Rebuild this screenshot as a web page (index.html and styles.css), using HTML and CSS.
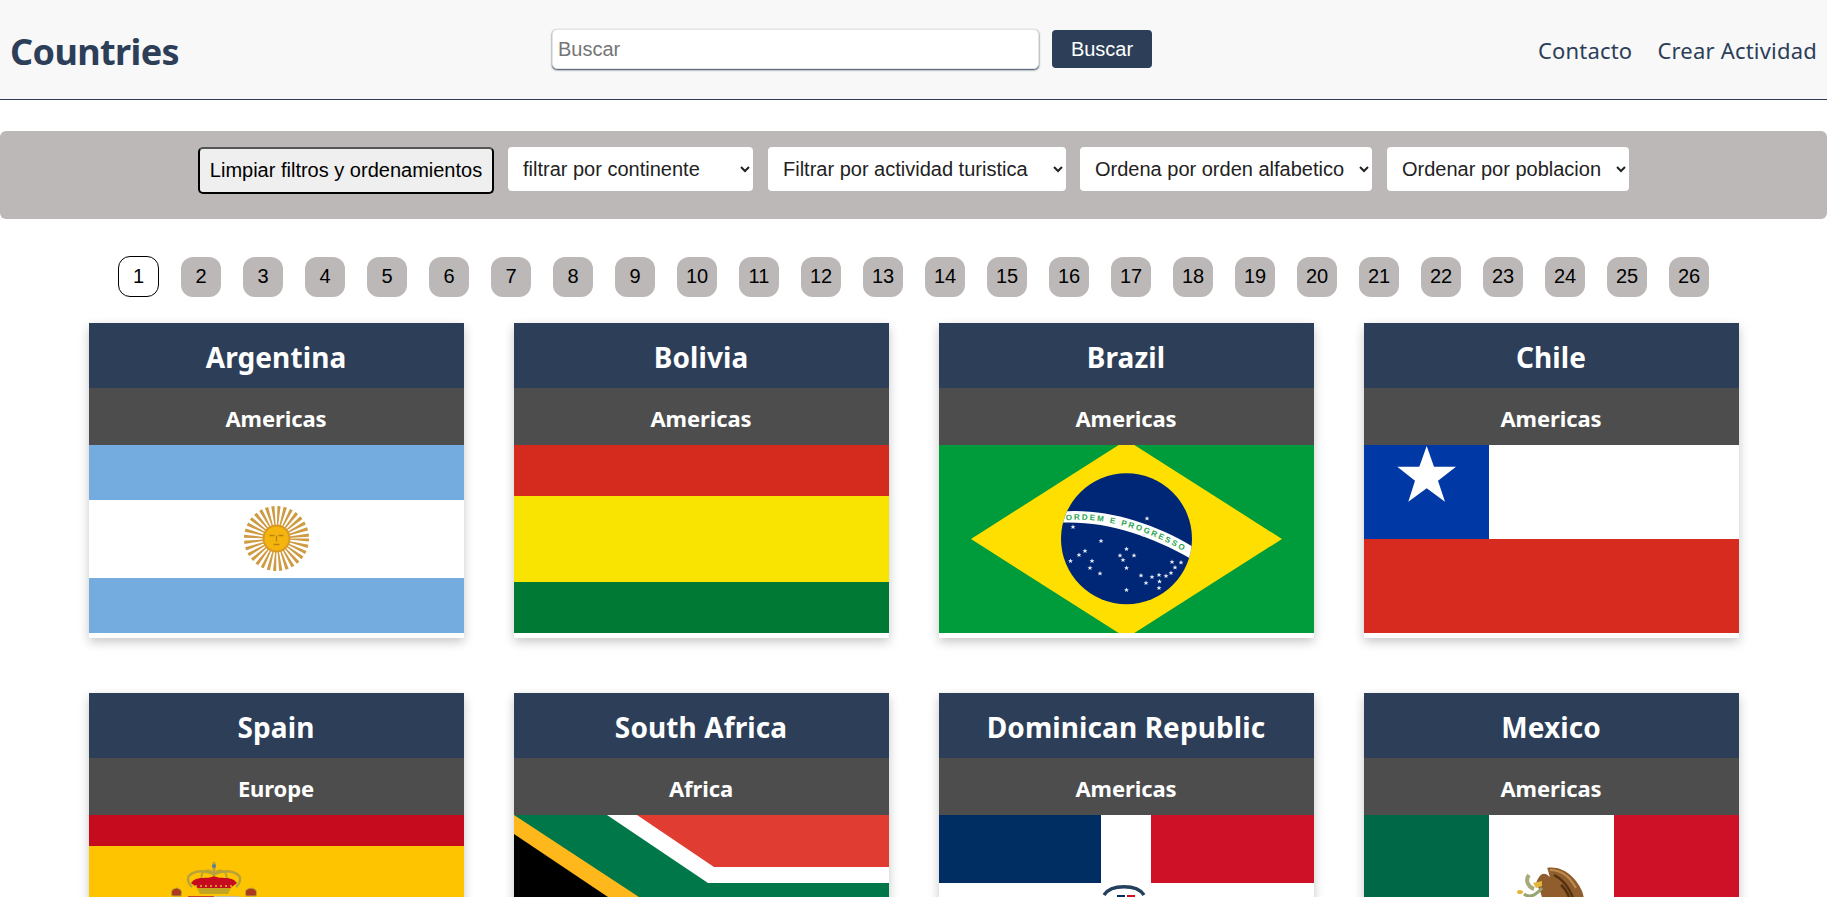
FILE: index.html
```html
<!DOCTYPE html>
<html lang="es">
<head>
<meta charset="utf-8">
<title>Countries</title>
<link rel="stylesheet" href="styles.css">
</head>
<body>
<header class="navbar">
  <h1 class="brand">Countries</h1>
  <form class="search">
    <input class="search-input" type="text" placeholder="Buscar">
    <button class="search-btn" type="button">Buscar</button>
  </form>
  <nav class="links"><a href="#">Contacto</a><a href="#">Crear Actividad</a></nav>
</header>
<section class="filters">
  <button class="clear" type="button">Limpiar filtros y ordenamientos</button>
  <select class="sel sel-a"><option>filtrar por continente</option></select>
  <select class="sel sel-b"><option>Filtrar por actividad turistica</option></select>
  <select class="sel sel-c"><option>Ordena por orden alfabetico</option></select>
  <select class="sel sel-d"><option>Ordenar por poblacion</option></select>
</section>
<nav class="pages">
  <span class="page active">1</span><span class="page">2</span><span class="page">3</span><span class="page">4</span><span class="page">5</span><span class="page">6</span><span class="page">7</span><span class="page">8</span><span class="page">9</span><span class="page">10</span><span class="page">11</span><span class="page">12</span><span class="page">13</span><span class="page">14</span><span class="page">15</span><span class="page">16</span><span class="page">17</span><span class="page">18</span><span class="page">19</span><span class="page">20</span><span class="page">21</span><span class="page">22</span><span class="page">23</span><span class="page">24</span><span class="page">25</span><span class="page">26</span>
</nav>
<main class="grid">
  <article class="card">
    <h2 class="name">Argentina</h2><h3 class="cont">Americas</h3>
    <svg class="flag" viewBox="0 0 375 188">
      <rect width="375" height="188" fill="#74acdf"/>
      <rect y="55" width="375" height="78" fill="#fff"/>
      <g transform="translate(187.5 93.5)">
        <circle r="22" fill="none" stroke="#c98f2e" stroke-width="21" stroke-dasharray="2.2 2.12" opacity=".9"/>
        <circle r="14" fill="#d99a22"/>
        <circle r="12" fill="#f6b40e"/>
        <path d="M-7-3h5M2-3h5M0-3v6M-3 6h6" stroke="#b98414" stroke-width="1.3" fill="none"/>
      </g>
    </svg>
  </article>
  <article class="card">
    <h2 class="name">Bolivia</h2><h3 class="cont">Americas</h3>
    <svg class="flag" viewBox="0 0 375 188">
      <rect width="375" height="51" fill="#d52b1e"/>
      <rect y="51" width="375" height="86" fill="#f9e300"/>
      <rect y="137" width="375" height="51" fill="#007934"/>
    </svg>
  </article>
  <article class="card">
    <h2 class="name">Brazil</h2><h3 class="cont">Americas</h3>
    <svg class="flag" viewBox="0 0 375 188">
      <defs>
        <path id="star" d="M0-2.6.7-.8 2.5-.8 1.1.3 1.6 2.1 0 1 -1.6 2.1-1.1.3-2.5-.8-.7-.8Z" fill="#e8ecf6"/>
        <clipPath id="globe"><circle cx="187.5" cy="93.7" r="65.5"/></clipPath>
      </defs>
      <rect width="375" height="188" fill="#009b3a"/>
      <polygon points="32,94 187.5,-5 343,94 187.5,193" fill="#fedf00"/>
      <circle cx="187.5" cy="93.7" r="65.5" fill="#002776"/>
      <path clip-path="url(#globe)" d="M118 67C165 62 215 78 256 103L252 114C210 90 165 75 118 78Z" fill="#fff"/>
      <path id="band" d="M127 75.5C165 71 212 86 252 110.5" fill="none"/>
      <text class="motto"><textPath href="#band">ORDEM E PROGRESSO</textPath></text>
      <g>
        <use href="#star" x="208" y="73.5"/><use href="#star" x="134" y="82"/><use href="#star" x="205" y="90"/>
        <use href="#star" x="162" y="96"/><use href="#star" x="187.5" y="104"/><use href="#star" x="146" y="106"/>
        <use href="#star" x="140" y="110"/><use href="#star" x="181" y="110.5"/><use href="#star" x="195" y="110.5"/>
        <use href="#star" x="184" y="115"/><use href="#star" x="131.5" y="116"/><use href="#star" x="153" y="116"/>
        <use href="#star" x="233" y="117"/><use href="#star" x="242" y="117.5"/><use href="#star" x="236" y="122.5"/>
        <use href="#star" x="151" y="123"/><use href="#star" x="187.5" y="123"/><use href="#star" x="232" y="128"/>
        <use href="#star" x="161" y="128.5"/><use href="#star" x="202" y="130.5"/><use href="#star" x="220" y="130"/>
        <use href="#star" x="227" y="131"/><use href="#star" x="213" y="132"/><use href="#star" x="220.5" y="136.5"/>
        <use href="#star" x="207" y="138"/><use href="#star" x="220" y="143"/><use href="#star" x="187.5" y="145"/>
      </g>
    </svg>
  </article>
  <article class="card">
    <h2 class="name">Chile</h2><h3 class="cont">Americas</h3>
    <svg class="flag" viewBox="0 0 375 188">
      <rect width="375" height="94" fill="#fff"/>
      <rect y="94" width="375" height="94" fill="#d72b1f"/>
      <rect width="125" height="94" fill="#0039a6"/>
      <polygon points="62.7,1 70,21.7 92,21.7 74,35.7 81,56.700 62.700,43.300 44.300,56.700 51,35.700 33.300,21.700 55.300,21.700" fill="#fff"/>
    </svg>
  </article>
  <article class="card">
    <h2 class="name">Spain</h2><h3 class="cont">Europe</h3>
    <svg class="flag" viewBox="0 0 375 188">
      <rect width="375" height="188" fill="#ffc400"/>
      <rect width="375" height="31" fill="#c60b1e"/>
      <rect y="141" width="375" height="47" fill="#c60b1e"/>
      <path d="M103 72C91 60 108 52 125 59C142 52 159 60 147 72" fill="none" stroke="#b8a23a" stroke-width="2.5"/>
      <path d="M113 66C110 55 120 53 125 59C130 53 140 55 137 66" fill="none" stroke="#b8a23a" stroke-width="2"/>
      <path d="M102 68C108 60 118 65 125 61C132 65 142 60 148 68L140 74H110Z" fill="#c60b1e"/>
      <rect x="123.500" y="47" width="3" height="14" fill="#b8a23a"/>
      <circle cx="125" cy="51" r="2" fill="#5b7f9a"/>
      <path d="M108 73H142L139 79H111Z" fill="#c2a520"/>
      <path d="M106 71H144" stroke="#d8b840" stroke-width="1.500" stroke-dasharray="2 3"/>
      <path d="M83 81C81 74 85 74 87.700 73C90 74 94 74 92 81Z" fill="#ad3a1c" stroke="#b8a23a"/>
      <path d="M157 81C155 74 159 74 162 73C165 74 169 74 167 81Z" fill="#ad3a1c" stroke="#b8a23a"/>
      <rect x="99" y="81" width="26" height="55" fill="#c8452a"/>
      <rect x="125" y="81" width="25" height="55" fill="#c4c0ac"/>
    </svg>
  </article>
  <article class="card">
    <h2 class="name">South Africa</h2><h3 class="cont">Africa</h3>
    <svg class="flag" viewBox="0 0 375 188">
      <rect width="375" height="188" fill="#007749"/>
      <polygon points="93,0 375,0 375,52 200,52" fill="#e03c31"/>
      <polygon points="93,0 123,0 200,52 375,52 375,68 194,68" fill="#fff"/>
      <polygon points="0,0 0,0 125,82 0,188" fill="#ffb81c"/>
      <polygon points="0,19 94,82 0,165" fill="#000"/>
    </svg>
  </article>
  <article class="card">
    <h2 class="name">Dominican Republic</h2><h3 class="cont">Americas</h3>
    <svg class="flag" viewBox="0 0 375 188">
      <rect width="375" height="188" fill="#fff"/>
      <rect width="162" height="68" fill="#002d62"/>
      <rect x="212" width="163" height="68" fill="#ce1126"/>
      <rect y="120" width="162" height="68" fill="#ce1126"/>
      <rect x="212" y="120" width="163" height="68" fill="#002d62"/>
      <path d="M165 80C172 69 198 69 205 80" fill="none" stroke="#23405f" stroke-width="3.500"/>
      <rect x="178" y="80" width="8" height="16" fill="#002d62"/>
      <rect x="188" y="80" width="8" height="16" fill="#ce1126"/>
    </svg>
  </article>
  <article class="card">
    <h2 class="name">Mexico</h2><h3 class="cont">Americas</h3>
    <svg class="flag" viewBox="0 0 375 188">
      <rect width="375" height="188" fill="#fff"/>
      <rect width="125" height="188" fill="#006847"/>
      <rect x="250" width="125" height="188" fill="#ce1126"/>
      <path d="M172 68C176 58 180 56 186 62C184 56 184 54 183 53C198 50 212 62 218 76C222 88 222 100 218 125H180C186 108 180 88 176 76Z" fill="#8f5e2c"/>
      <path d="M190 60C202 66 210 78 213 100M197 70C204 76 208 86 208 102" fill="none" stroke="#53300f" stroke-width="2.500"/>
      <path d="M186 55C197 55 206 62 212 73" fill="none" stroke="#c08d50" stroke-width="2"/>
      <polygon points="169,68 178,66 178,71 172,73" fill="#e4b53a"/>
      <path d="M165 60C161 65 164 72 170 74" fill="none" stroke="#a7a978" stroke-width="4"/>
      <path d="M160 79C166 84 172 80 178 73" fill="none" stroke="#98a672" stroke-width="3"/>
      <ellipse cx="156" cy="77" rx="3" ry="2" fill="#e4b53a"/>
    </svg>
  </article>
</main>
</body>
</html>
```

FILE: styles.css
```css
* { box-sizing: border-box; }
html, body { margin: 0; padding: 0; }
body { background: #fff; font-family: "Liberation Sans", Arial, sans-serif; color: #000; }

.navbar {
  position: relative;
  height: 100px;
  padding: 0 10px;
  background: #f8f8f8;
  border-bottom: 1px solid #2c3e58;
  display: flex;
  align-items: center;
  justify-content: space-between;
}
.brand { margin: 0; padding-top: 4px; font: 700 36px "Noto Sans", sans-serif; color: #2c3e58; letter-spacing: -.6px; }
.search { position: absolute; left: 552px; top: 29px; display: flex; gap: 13px; align-items: center; }
.search-input {
  width: 487px; height: 40px; padding: 0 5px;
  background: #fff; border: 1px solid #e4e4e4; border-radius: 5px;
  box-shadow: 0 1px 2px #2c3e58;
  font: 20px "Liberation Sans", sans-serif;
}
.search-input::placeholder { color: #757575; }
.search-btn {
  width: 100px; height: 38px; border: 0; border-radius: 4px;
  background: #2c3e58; color: #fff;
  font: 20px "Liberation Sans", sans-serif;
}
.links { display: flex; gap: 25px; }
.links a { color: #2c3e58; text-decoration: none; font: 22px "Noto Sans", sans-serif; letter-spacing: .2px; }

.filters {
  margin-top: 31px; height: 88px; padding-top: 16px;
  background: #bcb8b7; border-radius: 6px;
  display: flex; justify-content: center; align-items: flex-start; gap: 14px;
}
.clear {
  width: 296px; height: 47px; padding: 0;
  background: #efefef; color: #000;
  border: 2px solid #000; border-top-color: #555; border-radius: 5px;
  font: 20px "Liberation Sans", sans-serif;
}
.sel {
  height: 44px; padding: 0 2px 0 11px;
  background: #fff; color: #222;
  border: 0; border-radius: 4px;
  font: 20px "Liberation Sans", sans-serif;
}
.sel-a { width: 245px; margin-right: 1px; }
.sel-b { width: 298px; }
.sel-c { width: 292px; margin-right: 1px; }
.sel-d { width: 242px; }

.pages { margin-top: 37px; height: 41px; display: flex; justify-content: center; align-items: center; gap: 22px; }
.page {
  width: 40px; height: 40px;
  display: flex; align-items: center; justify-content: center;
  background: #bcb8b7; border-radius: 12px;
  font-size: 20px; color: #000;
}
.page.active { width: 41px; height: 41px; background: #fff; border: 1px solid #000; }

.grid {
  margin-top: 26px;
  display: grid; grid-template-columns: repeat(4, 375px);
  justify-content: center; column-gap: 50px; row-gap: 55px;
}
.card { height: 315px; background: #fff; box-shadow: 0 4px 10px rgba(0,0,0,.22); text-align: center; color: #fff; }
.name {
  margin: 0; height: 65px; padding-top: 2px;
  background: #2c3e58;
  font: 700 28px/65px "Noto Sans", sans-serif; letter-spacing: .1px;
}
.cont {
  margin: 0; height: 57px; padding-top: 2px;
  background: #4d4d4d;
  font: 700 22px/57px "Noto Sans", sans-serif; letter-spacing: -.1px;
}
.flag { display: block; width: 375px; height: 188px; }
.motto { font: 700 8px "Liberation Sans", sans-serif; fill: #1fa44d; letter-spacing: 1.95px; }
```
